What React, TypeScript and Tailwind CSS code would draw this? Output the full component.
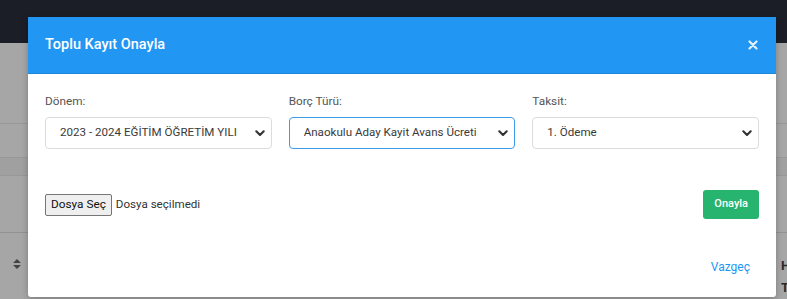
import { useState } from "react"

const selects = [
  { label: "Dönem:", value: "2023 - 2024 EĞİTİM ÖĞRETİM YILI", focused: false },
  { label: "Borç Türü:", value: "Anaokulu Aday Kayit Avans Ücreti", focused: true },
  { label: "Taksit:", value: "1. Ödeme", focused: false },
]

function Chevron() {
  return (
    <svg width="10" height="7" viewBox="0 0 10 7" className="shrink-0">
      <polyline points="1.3,1.3 5,5 8.7,1.3" fill="none" stroke="#333" strokeWidth="2.1" strokeLinecap="round" strokeLinejoin="round" />
    </svg>
  )
}

function SortIcon() {
  return (
    <svg width="8" height="10" viewBox="0 0 8 10">
      <polygon points="4,0 8,4 0,4" fill="#444" />
      <polygon points="0,6 8,6 4,10" fill="#444" />
    </svg>
  )
}

export default function App() {
  const [open] = useState(true)

  return (
    <div className="relative h-[299px] w-[787px] overflow-hidden font-['Roboto',sans-serif]">
      {/* page behind the dimmed backdrop */}
      <div className="h-[43px] bg-[#1b1e26]" />
      <div className="flex h-[256px] flex-col bg-[#a6a6a6]">
        <div className="h-[81px] border-b border-[#989898]" />
        <div className="h-[35px] border-b border-[#989898]" />
        <div className="h-[18px] border-b border-[#989898] bg-[#a0a0a0]" />
        <div className="h-[57px] border-b border-[#929292]" />
        <div className="flex flex-1 items-start justify-between pt-[22px]">
          <div className="pl-[13px] pt-[4px]">
            <SortIcon />
          </div>
          <div className="text-[13px] font-bold leading-[22px] text-[#2a2a2a]">
            <div className="w-[6px] overflow-hidden">H</div>
            <div className="w-[6px] overflow-hidden">T</div>
          </div>
        </div>
      </div>

      {open && (
        <div className="absolute left-[28px] top-[17px] flex h-[280px] w-[748px] flex-col overflow-hidden rounded-b-[3px] bg-white shadow-[0_2px_6px_rgba(0,0,0,0.25)]">
          <div className="flex h-[57px] items-center justify-between border-b border-[#1c86d9] bg-[#2196f3] pl-[17px] pr-[18px]">
            <h2 className="text-[14.5px] font-medium text-white">Toplu Kayıt Onayla</h2>
            <svg width="10" height="10" viewBox="0 0 10 10">
              <path d="M1.5 1.5 L8.5 8.5 M8.5 1.5 L1.5 8.5" stroke="#e3f1fd" strokeWidth="2.2" strokeLinecap="round" />
            </svg>
          </div>

          <div className="grid grid-cols-3 gap-[17px] px-[17px] pt-[20px]">
            {selects.map((s) => (
              <div key={s.label} className="flex flex-col">
                <label className="h-[23px] text-[11.8px] leading-[14px] text-[#555]">{s.label}</label>
                <div
                  className={`flex h-[32px] items-center justify-between rounded-[4px] border pl-[14px] pr-[6px] ${
                    s.focused ? "border-[#3d9be9]" : "border-[#dcdcdc]"
                  }`}
                >
                  <span className="overflow-hidden whitespace-nowrap text-[11.6px] text-[#3a3a3a]">{s.value}</span>
                  <Chevron />
                </div>
              </div>
            ))}
          </div>

          <div className="flex items-center justify-between px-[17px] pt-[41px]">
            <div className="flex items-center gap-[4px] text-[11.6px] text-[#333]">
              <button className="h-[22px] rounded-[2px] border border-[#767676] bg-[#efefef] px-[5px] text-[11.8px] text-[#111]">
                Dosya Seç
              </button>
              <span>Dosya seçilmedi</span>
            </div>
            <button className="h-[29px] rounded-[3px] bg-[#26b46f] px-[11px] text-[11px] font-medium text-white">
              Onayla
            </button>
          </div>

          <div className="flex flex-1 items-start justify-end pr-[26px] pt-[39px]">
            <button className="text-[12px] text-[#2196f3]">Vazgeç</button>
          </div>
        </div>
      )}
    </div>
  )
}
